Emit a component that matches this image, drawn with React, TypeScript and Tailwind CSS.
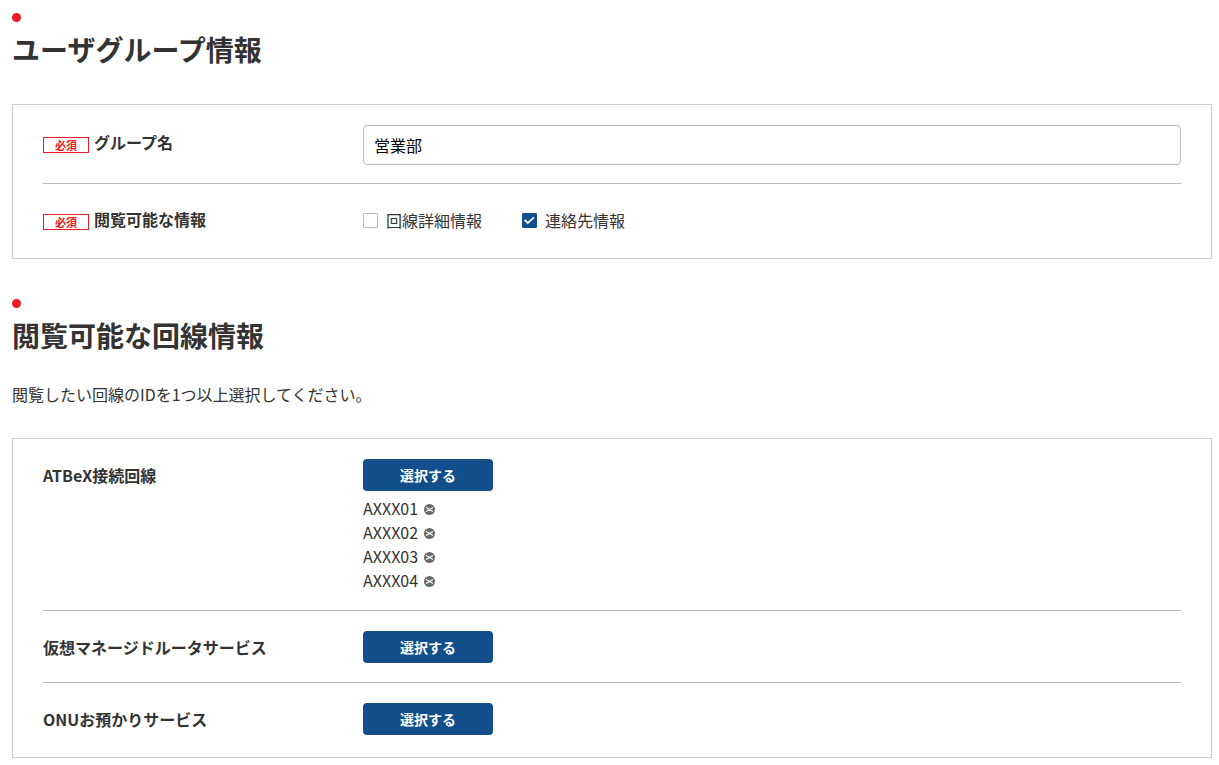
import { useState } from "react";
import type { ReactNode } from "react";

type LineService = {
  key: string;
  name: string;
  lines: string[];
};

const INITIAL_SERVICES: LineService[] = [
  {
    key: "atbex",
    name: "ATBeX接続回線",
    lines: ["AXXX01", "AXXX02", "AXXX03", "AXXX04"],
  },
  { key: "router", name: "仮想マネージドルータサービス", lines: [] },
  { key: "onu", name: "ONUお預かりサービス", lines: [] },
];

function SectionHeading({ children }: { children: ReactNode }) {
  return (
    <div>
      <span className="block size-[9px] rounded-full bg-[#ee1c25]" />
      <h2 className="mt-[7px] text-[28px] font-bold leading-10">{children}</h2>
    </div>
  );
}

function RequiredBadge() {
  return (
    <span className="mr-[5px] mt-[7px] flex h-4 w-[46px] shrink-0 items-center justify-center border border-[#ee1c25] text-[11px] font-bold leading-none text-[#ee1c25]">
      必須
    </span>
  );
}

function CheckOption({
  label,
  checked,
  onChange,
}: {
  label: string;
  checked: boolean;
  onChange: (checked: boolean) => void;
}) {
  return (
    <label className="flex items-center gap-2">
      <span className="grid size-[15px]">
        <input
          type="checkbox"
          checked={checked}
          onChange={(e) => onChange(e.target.checked)}
          className="col-start-1 row-start-1 size-[15px] appearance-none rounded-[1px] border border-[#bbb] bg-white checked:border-[#114e8b] checked:bg-[#114e8b]"
        />
        {checked && (
          <svg
            viewBox="0 0 15 15"
            className="pointer-events-none col-start-1 row-start-1 size-[15px]"
            fill="none"
            stroke="#fff"
            strokeWidth="1.8"
          >
            <path d="M2.6 6.8 L5.8 10 L12 4.4" />
          </svg>
        )}
      </span>
      {label}
    </label>
  );
}

function RemoveIcon() {
  return (
    <svg viewBox="0 0 11 11" className="size-[11px]">
      <circle cx="5.5" cy="5.5" r="5.5" fill="#6b6b6b" />
      <path
        d="M2 3.5 L9 7.5 M9 3.5 L2 7.5"
        stroke="#fff"
        strokeWidth="1.1"
      />
    </svg>
  );
}

export default function App() {
  const [groupName, setGroupName] = useState("営業部");
  const [canViewLines, setCanViewLines] = useState(false);
  const [canViewContacts, setCanViewContacts] = useState(true);
  const [services, setServices] = useState(INITIAL_SERVICES);

  const removeLine = (key: string, line: string) => {
    setServices((prev) =>
      prev.map((s) =>
        s.key === key ? { ...s, lines: s.lines.filter((l) => l !== line) } : s
      )
    );
  };

  return (
    <main className="bg-white pb-2 pl-3 pr-[7px] pt-[13px] font-['Noto_Sans_CJK_JP',sans-serif] text-base leading-6 text-[#333]">
      <section>
        <SectionHeading>ユーザグループ情報</SectionHeading>

        <div className="mt-[35px] border border-[#ccc] px-[30px]">
          <div className="flex border-b border-[#bbb] pb-[18px] pt-5">
            <div className="flex w-80 shrink-0 items-start pt-[5px]">
              <RequiredBadge />
              <label htmlFor="group-name" className="font-bold">
                グループ名
              </label>
            </div>
            <input
              id="group-name"
              type="text"
              value={groupName}
              onChange={(e) => setGroupName(e.target.value)}
              className="h-10 min-w-0 flex-1 rounded-sm border border-[#bbb] bg-white px-[10px] text-black"
            />
          </div>
          <div className="flex pb-[26px] pt-[18px]">
            <div className="flex w-80 shrink-0 items-start pt-[5px]">
              <RequiredBadge />
              <span id="viewable-info" className="font-bold">
                閲覧可能な情報
              </span>
            </div>
            <div
              role="group"
              aria-labelledby="viewable-info"
              className="flex flex-wrap gap-x-10 pt-[6px]"
            >
              <CheckOption
                label="回線詳細情報"
                checked={canViewLines}
                onChange={setCanViewLines}
              />
              <CheckOption
                label="連絡先情報"
                checked={canViewContacts}
                onChange={setCanViewContacts}
              />
            </div>
          </div>
        </div>
      </section>

      <section className="mt-10">
        <SectionHeading>閲覧可能な回線情報</SectionHeading>
        <p className="mt-[27px]">閲覧したい回線のIDを1つ以上選択してください。</p>

        <div className="mt-8 border border-[#ccc] px-[30px] pb-[3px]">
          {services.map((service) => (
            <div
              key={service.key}
              className="flex border-b border-[#bbb] pb-[19px] pt-5 last:border-b-0"
            >
              <h3 className="w-80 shrink-0 pt-1 font-bold">{service.name}</h3>
              <div>
                <button
                  type="button"
                  className="block h-8 w-[130px] rounded-sm bg-[#114e8b] text-sm font-bold text-white hover:bg-[#0d3f71]"
                >
                  選択する
                </button>
                {service.lines.length > 0 && (
                  <ul className="-mb-px mt-[5px]">
                    {service.lines.map((line) => (
                      <li key={line} className="flex items-center gap-[6px]">
                        {line}
                        <button
                          type="button"
                          aria-label={`${line}を削除`}
                          onClick={() => removeLine(service.key, line)}
                          className="pt-0.5"
                        >
                          <RemoveIcon />
                        </button>
                      </li>
                    ))}
                  </ul>
                )}
              </div>
            </div>
          ))}
        </div>
      </section>
    </main>
  );
}
